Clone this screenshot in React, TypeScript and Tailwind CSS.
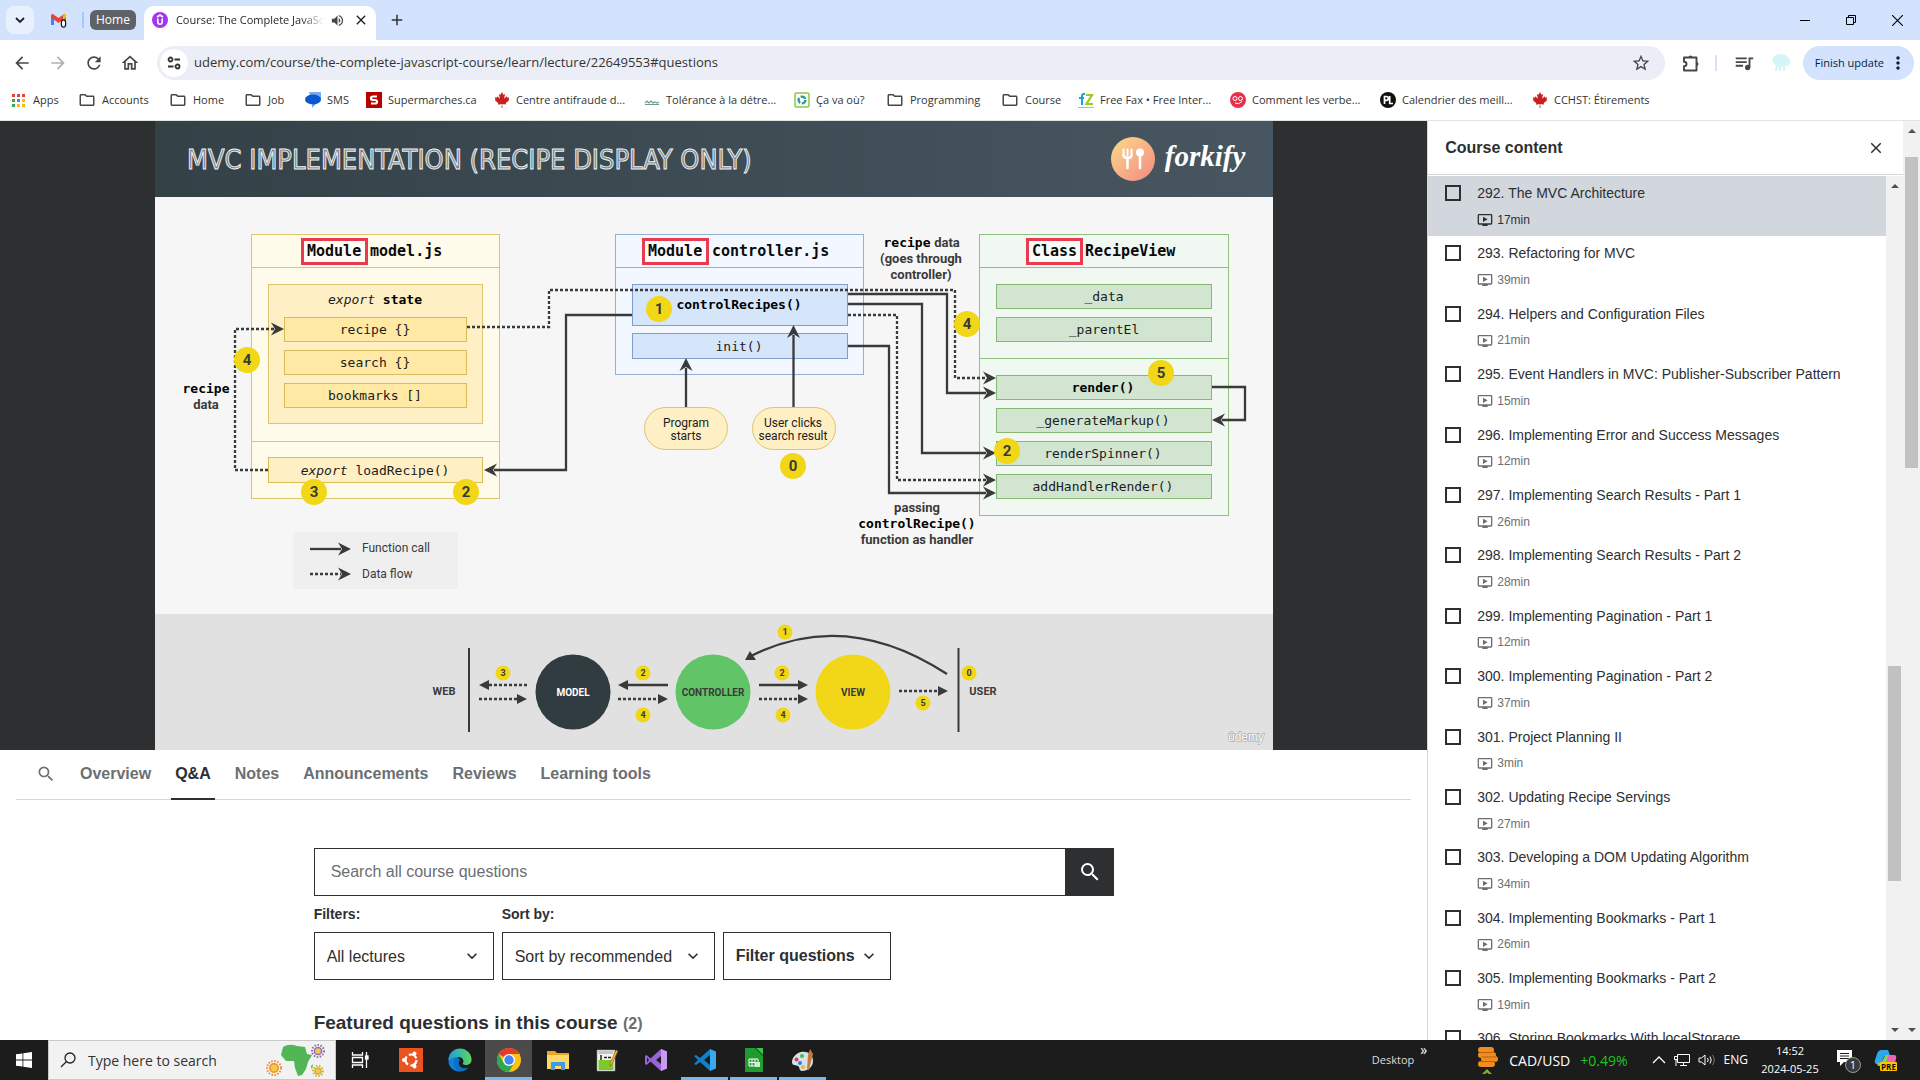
import React from "react";
import {
  MdArrowBack, MdArrowForward, MdRefresh, MdOutlineHome, MdVolumeUp, MdClose, MdAdd, MdStarBorder,
  MdQueueMusic, MdMoreVert, MdSearch, MdExpandMore, MdOndemandVideo, MdOutlineFolder,
} from "react-icons/md";
import { FaCanadianMapleLeaf } from "react-icons/fa";

/* ---------- Browser chrome ---------- */

function GmailIcon() {
  return (
    <svg viewBox="0 0 18 18" className="size-[18px]" aria-hidden="true">
      <path d="M1 4v10h3V7z" fill="#4285f4" />
      <path d="M13 7v7h3V4z" fill="#34a853" />
      <path d="M1 4l1.500-1.200L8.500 7l6-4.200L16 4v2.500l-7.500 5.500L1 6.500z" fill="#ea4335" />
      <path d="M13 4l1.500-1.200Q16 3 16 4.500v2L13 8.500z" fill="#fbbc04" />
      <ellipse cx="13.500" cy="12.500" rx="2.200" ry="3.700" fill="#fff" stroke="#111" strokeWidth="1.200" />
    </svg>
  );
}

function UdemyIcon() {
  return (
    <svg viewBox="0 0 16 16" className="size-4 shrink-0" aria-hidden="true">
      <circle cx="8" cy="8" r="8" fill="#a435f0" />
      <path d="M5 5l3-2 3 2M5.800 6.500v3.500a2.200 2.200 0 0 0 4.400 0V6.500" fill="none" stroke="#fff" strokeWidth="1.600" />
    </svg>
  );
}

function TuneIcon() {
  return (
    <svg viewBox="0 0 14 14" className="size-[14px]" fill="none" stroke="#333" strokeWidth="1.800" aria-hidden="true">
      <circle cx="3.500" cy="3.500" r="2" />
      <path d="M7.500 3.500H13M1 10.500h5.500" />
      <circle cx="10.500" cy="10.500" r="2" />
    </svg>
  );
}

function PuzzleIcon() {
  return (
    <svg viewBox="0 0 20 20" className="size-5" aria-hidden="true">
      <path d="M3 4.500h12.500v13H3v-4.200q2.500 0 2.500-2.300T3 8.700z" fill="none" stroke="#474747" strokeWidth="1.900" strokeLinejoin="round" />
      <path d="M7.500 4.500a2 2 0 0 1 4 0zM15.500 9a2 2 0 0 1 0 4z" fill="#474747" />
    </svg>
  );
}

function AppsIcon() {
  const colors = ["#ea4335", "#ea4335", "#ea4335", "#34a853", "#4285f4", "#fbbc04", "#34a853", "#fbbc04", "#fbbc04"];
  return (
    <svg viewBox="0 0 13 13" className="mr-0.5 size-[13px]" aria-hidden="true">
      {colors.map((c, i) => <rect key={i} x={(i % 3) * 5} y={Math.floor(i / 3) * 5} width="3" height="3" fill={c} />)}
    </svg>
  );
}

const maple = <FaCanadianMapleLeaf className="size-4 text-[#c8201e]" />;
const folder = <MdOutlineFolder className="size-[18px] text-[#474747]" />;

const bookmarks: { label: string; width: string; icon: React.ReactNode }[] = [
  { label: "Apps", width: "w-[66px]", icon: <AppsIcon /> },
  { label: "Accounts", width: "w-[91px]", icon: folder },
  { label: "Home", width: "w-[75px]", icon: folder },
  { label: "Job", width: "w-[61px]", icon: folder },
  {
    label: "SMS", width: "w-[61px]",
    icon: <svg viewBox="0 0 16 16" className="size-4"><path d="M4 0h8a4 4 0 0 1 3 8l-8 8V12z" fill="#7baaf7" /><ellipse cx="8" cy="7.500" rx="8" ry="5" fill="#0b57d0" /></svg>,
  },
  {
    label: "Supermarches.ca", width: "w-[128px]",
    icon: <svg viewBox="0 0 16 16" className="size-4"><rect width="16" height="16" fill="#b80000" /><path d="M11 4.500H7q-2 0-2 1.700T7 8h2q2 0 2 1.800t-2 1.700H5" fill="none" stroke="#fff" strokeWidth="2.200" /></svg>,
  },
  { label: "Centre antifraude d...", width: "w-[150px]", icon: maple },
  {
    label: "Tolérance à la détre...", width: "w-[150px]",
    icon: <svg viewBox="0 0 16 16" className="size-4"><path d="M1 11l2-2 2 2 2-2 2 2 2-1 2 1 2-1M1 12.500h14" fill="none" stroke="#6f9c8e" strokeWidth="1.200" /></svg>,
  },
  {
    label: "Ça va où?", width: "w-[92px]",
    icon: <svg viewBox="0 0 16 16" className="size-4"><rect x="1" y="1" width="14" height="14" rx="1.500" fill="#fff" stroke="#8dc63f" strokeWidth="1.500" /><circle cx="8" cy="8" r="3.400" fill="none" stroke="#2a9d9a" strokeWidth="2.400" strokeDasharray="5.500 1.600" /></svg>,
  },
  { label: "Programming", width: "w-[115px]", icon: folder },
  { label: "Course", width: "w-[77px]", icon: folder },
  {
    label: "Free Fax • Free Inter...", width: "w-[152px]",
    icon: <svg viewBox="0 0 16 16" className="size-4"><path d="M7 2H5.500Q4 2 4 4v9M1 6h5" fill="none" stroke="#1ba1e2" strokeWidth="2" /><path d="M8 3h6l-5.500 9H15" fill="none" stroke="#9bcb1b" strokeWidth="2.200" /><path d="M0 15.500h16" stroke="#7ec8ec" /></svg>,
  },
  {
    label: "Comment les verbe...", width: "w-[150px]",
    icon: <svg viewBox="0 0 16 16" className="size-4"><circle cx="8" cy="8" r="8" fill="#e8304a" /><circle cx="5" cy="6.500" r="2" fill="none" stroke="#fff" /><circle cx="10.500" cy="6.500" r="2" fill="none" stroke="#fff" /><path d="M5 11q4 2 7-1.500" fill="none" stroke="#fff" /></svg>,
  },
  {
    label: "Calendrier des meill...", width: "w-[152px]",
    icon: <svg viewBox="0 0 16 16" className="size-4"><circle cx="8" cy="8" r="8" fill="#111" /><path d="M4.500 12V4.500h2q1.800 0 1.800 1.900T6.500 8.300h-2M9.700 4v7.500h3.300" fill="none" stroke="#fff" strokeWidth="1.700" /></svg>,
  },
  { label: "CCHST: Étirements", width: "w-[130px]", icon: maple },
];

function TabStrip() {
  return (
    <div className="flex h-10 items-center bg-[#d3e3fd] pl-1.5 text-[#1f1f1f]">
      <button aria-label="Search tabs" className="flex size-7 items-center justify-center rounded-lg bg-[#eaf1fe]">
        <svg viewBox="0 0 10 10" className="size-[10px]" fill="none" stroke="#1f1f1f" strokeWidth="1.800"><path d="M1 3l4 4 4-4" /></svg>
      </button>
      <button aria-label="Gmail" className="ml-4"><GmailIcon /></button>
      <div className="ml-3.5 h-4 w-0.5 bg-[#a8c7fa]" />
      <button className="ml-1.5 h-5 rounded-md bg-[#5f6368] px-1.5 text-[12px] leading-5 text-white">Home</button>
      <div className="ml-2 mt-1.5 flex h-[34px] w-[232px] items-center rounded-t-[10px] bg-white pb-1.5 pl-2">
        <UdemyIcon />
        <span className="ml-2 w-[148px] overflow-hidden whitespace-nowrap text-[11px] mask-r-from-85%">Course: The Complete JavaScript</span>
        <MdVolumeUp className="ml-1.5 size-[15px] shrink-0 text-[#474747]" />
        <button aria-label="Close tab" className="ml-2"><MdClose className="size-4" /></button>
      </div>
      <button aria-label="New tab" className="ml-3"><MdAdd className="size-[18px] text-[#333]" /></button>
      <div className="ml-auto flex h-full">
        <button aria-label="Minimize" className="flex w-[46px] items-center justify-center"><svg viewBox="0 0 10 10" className="size-[10px]" stroke="#000"><path d="M0 5.500h10" /></svg></button>
        <button aria-label="Restore" className="flex w-[46px] items-center justify-center"><svg viewBox="0 0 10 10" className="size-[10px]" stroke="#000" fill="none"><path d="M.5 2.500h7v7h-7zM2.500 2.500v-2h7v7h-2" /></svg></button>
        <button aria-label="Close" className="flex w-[46px] items-center justify-center"><svg viewBox="0 0 10 10" className="size-[11px]" stroke="#000"><path d="M0 0l10 10M10 0L0 10" /></svg></button>
      </div>
    </div>
  );
}

function Toolbar() {
  return (
    <div className="flex h-[46px] items-center bg-white pl-3 text-[#474747]">
      <div className="flex gap-4">
        <button aria-label="Back"><MdArrowBack className="size-5" /></button>
        <button aria-label="Forward"><MdArrowForward className="size-5 text-[#b0b0b0]" /></button>
        <button aria-label="Reload"><MdRefresh className="size-5" /></button>
        <button aria-label="Home page"><MdOutlineHome className="size-5" /></button>
      </div>
      <div className="ml-[17px] flex h-[34px] flex-1 items-center rounded-full bg-[#ebeef7] pl-[3px] pr-3.5">
        <button aria-label="Site information" className="flex size-7 items-center justify-center rounded-full bg-white"><TuneIcon /></button>
        <input aria-label="Address" className="ml-1.5 flex-1 bg-transparent text-[13px] text-[#333] outline-none" defaultValue="udemy.com/course/the-complete-javascript-course/learn/lecture/22649553#questions" />
        <button aria-label="Bookmark this tab"><MdStarBorder className="size-5" /></button>
      </div>
      <button aria-label="Extensions" className="ml-4"><PuzzleIcon /></button>
      <div className="ml-3.5 h-4 w-0.5 bg-[#d3e3fd]" />
      <button aria-label="Media controls" className="ml-4"><MdQueueMusic className="size-[22px]" /></button>
      <button aria-label="Profile" className="ml-4">
        <svg viewBox="0 0 20 20" className="size-5"><path d="M10 1q5 0 8 4t0 7l-4 1v5h-2v-4h-2v4H8v-4l-2 4H4l1-6Q0 9 2 5t8-4z" fill="#d4f6f8" /></svg>
      </button>
      <button className="ml-3 mr-1.5 flex h-[34px] items-center rounded-full bg-[#d3e3fd] pl-3 pr-1.5 text-[11px] font-medium text-[#041e49]">
        Finish update <MdMoreVert className="ml-1 size-5" />
      </button>
    </div>
  );
}

function BookmarksBar() {
  return (
    <nav aria-label="Bookmarks" className="flex h-[35px] items-center border-b border-[#dfe5e0] bg-white pb-1.5 pl-3 text-[11px] text-[#333]">
      {bookmarks.map((b, i) => (
        <a key={i} href="#" className={"flex shrink-0 items-center gap-1.5 whitespace-nowrap " + b.width}>
          {b.icon}{b.label}
        </a>
      ))}
    </nav>
  );
}

/* ---------- Slide diagram ---------- */

const MONO = '"DejaVu Sans Mono", monospace';
const INK = "#3a3a3a";

type Box = { x: number; y: number; w: number; h: number; fill: string; stroke: string };
const boxes: Box[] = [
  { x: 251, y: 234, w: 249, h: 265, fill: "#fffbea", stroke: "#dcc56f" },
  { x: 268, y: 284, w: 215, h: 140, fill: "#ffefc4", stroke: "#dcc56f" },
  { x: 284, y: 317, w: 183, h: 25, fill: "#ffe9a5", stroke: "#d8bc58" },
  { x: 284, y: 350, w: 183, h: 25, fill: "#ffe9a5", stroke: "#d8bc58" },
  { x: 284, y: 383, w: 183, h: 25, fill: "#ffe9a5", stroke: "#d8bc58" },
  { x: 268, y: 457, w: 215, h: 26, fill: "#ffefc4", stroke: "#d8bc58" },
  { x: 615, y: 234, w: 249, h: 141, fill: "#f3f7ff", stroke: "#93b1d6" },
  { x: 632, y: 284, w: 216, h: 42, fill: "#d6e6fa", stroke: "#7f9ecb" },
  { x: 632, y: 333, w: 216, h: 26, fill: "#d6e6fa", stroke: "#7f9ecb" },
  { x: 979, y: 234, w: 250, h: 282, fill: "#f1f8f1", stroke: "#8fc380" },
  { x: 996, y: 284, w: 216, h: 25, fill: "#d1e5d0", stroke: "#86b873" },
  { x: 996, y: 317, w: 216, h: 25, fill: "#d1e5d0", stroke: "#86b873" },
  { x: 996, y: 375, w: 216, h: 25, fill: "#d1e5d0", stroke: "#86b873" },
  { x: 996, y: 408, w: 216, h: 25, fill: "#d1e5d0", stroke: "#86b873" },
  { x: 996, y: 441, w: 216, h: 25, fill: "#d1e5d0", stroke: "#86b873" },
  { x: 996, y: 474, w: 216, h: 25, fill: "#d1e5d0", stroke: "#86b873" },
];

const codeLabels: [string, number, number][] = [
  ["recipe {}", 375, 334], ["search {}", 375, 367], ["bookmarks []", 375, 400],
  ["init()", 739, 351], ["_data", 1104, 301], ["_parentEl", 1104, 334],
  ["_generateMarkup()", 1103, 425], ["renderSpinner()", 1103, 458], ["addHandlerRender()", 1103, 491],
];

const solidLines = [
  "M632 315H566V470H494", "M848 294H947V393H986", "M848 304H922V453H986", "M848 346H889V493H986",
  "M1212 387H1245V420H1222", "M686 407V368", "M793.500 407V335", "M310 549H341",
];
const dottedLines = [
  "M467 327H549V290H955V378H986", "M848 315H897V480H986", "M268 470H235V329H274", "M310 574H341",
];
const heads: [number, number, number][] = [
  [484, 470, 180], [996, 393, 0], [996, 453, 0], [996, 493, 0], [1212, 420, 180], [686, 358, -90], [793.5, 325, -90],
  [351, 549, 0], [996, 378, 0], [996, 480, 0], [284, 329, 0], [351, 574, 0],
];
const badges: [number, number, string][] = [
  [247, 360, "4"], [314, 492, "3"], [466, 492, "2"], [659, 309, "1"], [793, 466, "0"],
  [967, 324, "4"], [1161, 373, "5"], [1007, 451, "2"],
];
const smallBadges: [number, number, string][] = [
  [503, 673, "3"], [643, 673, "2"], [643, 715, "4"], [782, 673, "2"], [783, 715, "4"],
  [923, 703, "5"], [969, 673, "0"], [785, 632, "1"],
];
const flow: [number, number, number, boolean][] = [
  [527, 479, 685, true], [479, 527, 699, true], [668, 618, 685, false], [618, 668, 699, true],
  [759, 808, 685, false], [759, 808, 699, true], [899, 948, 691, true],
];

function Slide() {
  return (
    <svg viewBox="155 121 1118 629" className="w-[1118px] max-w-full" role="img" aria-label="MVC implementation diagram">
      <defs>
        <linearGradient id="top"><stop offset="0" stopColor="#344147" /><stop offset="1" stopColor="#475660" /></linearGradient>
        <linearGradient id="logo" x1="0" y1="0" x2="1" y2="1"><stop offset="0" stopColor="#fbdb89" /><stop offset="1" stopColor="#f48982" /></linearGradient>
      </defs>
      <rect x="155" y="121" width="1118" height="76" fill="url(#top)" />
      <rect x="155" y="197" width="1118" height="417" fill="#f6f6f6" />
      <rect x="155" y="614" width="1118" height="136" fill="#e1e1e1" />

      <text x="187" y="169" fontSize="27" fontFamily='"DejaVu Sans Condensed", sans-serif' fill="#76828a" stroke="#f0f2f2" strokeWidth="0.900">MVC IMPLEMENTATION (RECIPE DISPLAY ONLY)</text>
      <circle cx="1133" cy="159" r="22" fill="url(#logo)" />
      <g fill="none" stroke="#fff" strokeLinecap="round">
        <path d="M1123.500 149.500v6M1127.500 149.500v6M1131.500 149.500v6" strokeWidth="2" />
        <path d="M1123.500 155q0 3 4 3t4-3M1127.500 158v10M1140 156v12" strokeWidth="2.500" />
      </g>
      <circle cx="1140" cy="152.500" r="4" fill="#fff" />
      <text x="1205" y="166" fontSize="29" textAnchor="middle" fontFamily='"Liberation Serif", serif' fontStyle="italic" fontWeight="700" fill="#fff">forkify</text>

      {boxes.map((b, i) => <rect key={i} x={b.x + 0.5} y={b.y + 0.5} width={b.w - 1} height={b.h - 1} fill={b.fill} stroke={b.stroke} />)}
      <path d="M251 267.500h249M251 441.500h249" stroke="#dcc56f" />
      <path d="M615 267.500h249" stroke="#93b1d6" />
      <path d="M979 267.500h250M979 358.500h250" stroke="#8fc380" />

      <g fill="#fff" fillOpacity="0.5" stroke="#e93a50" strokeWidth="3">
        <rect x="302.500" y="239.500" width="64" height="24" />
        <rect x="643.500" y="239.500" width="64" height="24" />
        <rect x="1027.500" y="239.500" width="54" height="24" />
      </g>
      <g fontFamily={MONO} fontSize="15" fontWeight="700" fill="#0a0a0a">
        <text x="307" y="256">Module</text><text x="370" y="256">model.js</text>
        <text x="648" y="256">Module</text><text x="712" y="256">controller.js</text>
        <text x="1032" y="256">Class</text><text x="1085" y="256">RecipeView</text>
      </g>
      <g fontFamily={MONO} fontSize="13" fill="#1c1c1c">
        {codeLabels.map(([t, x, y]) => <text key={t} x={x} y={y} textAnchor="middle">{t}</text>)}
        <text x="375" y="304" textAnchor="middle"><tspan fontStyle="italic">export</tspan> <tspan fontWeight="700" fill="#000">state</tspan></text>
        <text x="375" y="475" textAnchor="middle"><tspan fontStyle="italic">export</tspan> loadRecipe()</text>
      </g>
      <g fontFamily={MONO} fontSize="13" fontWeight="700" fill="#000" textAnchor="middle">
        <text x="739" y="309">controlRecipes()</text>
        <text x="1103" y="392">render()</text>
        <text x="206" y="393">recipe</text>
        <text x="917" y="528">controlRecipe()</text>
        <text x="907" y="247">recipe</text>
      </g>
      <g fontFamily="Roboto, sans-serif" fontSize="13" fontWeight="700" fill={INK} textAnchor="middle">
        <text x="206" y="409">data</text>
        <text x="947" y="247">data</text>
        <text x="921" y="263">(goes through</text>
        <text x="921" y="279">controller)</text>
        <text x="917" y="512">passing</text>
        <text x="917" y="544">function as handler</text>
      </g>

      <rect x="644.500" y="407.500" width="83" height="42" rx="21" fill="#ffefc4" stroke="#dcc56f" />
      <rect x="752.500" y="407.500" width="83" height="42" rx="21" fill="#ffefc4" stroke="#dcc56f" />
      <g fontFamily="Roboto, sans-serif" fontSize="12" fill="#1c1c1c" textAnchor="middle">
        <text x="686" y="427">Program</text><text x="686" y="440">starts</text>
        <text x="793" y="427">User clicks</text><text x="793" y="440">search result</text>
      </g>
      <rect x="293" y="532" width="165" height="57" fill="#efefef" />
      <g fontFamily="Roboto, sans-serif" fontSize="12" fill={INK}>
        <text x="362" y="552">Function call</text><text x="362" y="578">Data flow</text>
      </g>

      <g fill="none" stroke={INK} strokeWidth="2.300">
        {solidLines.map((d) => <path key={d} d={d} />)}
        {dottedLines.map((d) => <path key={d} d={d} strokeDasharray="3 2" />)}
      </g>
      {heads.map(([x, y, r], i) => <path key={i} d="M0 0L-13 -6.500L-9 0L-13 6.500Z" transform={`translate(${x} ${y}) rotate(${r})`} fill={INK} />)}
      {badges.map(([x, y, t], i) => (
        <g key={i}>
          <circle cx={x} cy={y} r="13" fill="#f1d718" />
          <text x={x} y={y + 5} textAnchor="middle" fontFamily="Roboto, sans-serif" fontWeight="700" fontSize="15" fill={INK}>{t}</text>
        </g>
      ))}

      <path d="M469 648v84M958.500 648v84" stroke={INK} strokeWidth="2" />
      <path d="M947 674Q846 608 751 656" fill="none" stroke={INK} strokeWidth="2.300" />
      <path d="M745 660l5-9 6 9z" fill={INK} />
      {flow.map(([a, b, y, dotted], i) => {
        const dir = b > a ? 1 : -1;
        return (
          <g key={i}>
            <path d={`M${a} ${y}H${b - dir * 9}`} stroke={INK} strokeWidth="2.300" strokeDasharray={dotted ? "3 2" : undefined} />
            <path d={`M${b} ${y}l${-10 * dir} -5v10z`} fill={INK} />
          </g>
        );
      })}
      <circle cx="573" cy="692" r="37.500" fill="#313c41" />
      <circle cx="713" cy="692" r="37.500" fill="#61c466" />
      <circle cx="853" cy="692" r="37.500" fill="#f1d718" />
      <g fontFamily="Roboto, sans-serif" fontWeight="700" textAnchor="middle" fontSize="10" fill={INK}>
        <text x="573" y="696" fill="#fff">MODEL</text><text x="713" y="696">CONTROLLER</text><text x="853" y="696">VIEW</text>
        <g fontSize="11"><text x="444" y="695">WEB</text><text x="983" y="695">USER</text></g>
      </g>
      {smallBadges.map(([x, y, t], i) => (
        <g key={i}>
          <circle cx={x} cy={y} r="7.500" fill="#f1d718" />
          <text x={x} y={y + 3} textAnchor="middle" fontFamily="Roboto, sans-serif" fontWeight="700" fontSize="9" fill={INK}>{t}</text>
        </g>
      ))}
      <g fontSize="12" fontFamily='"Liberation Sans", sans-serif'>
        <text x="1228" y="741" fill="#fafafa" stroke="#b0b0b0" strokeWidth="1.500" paintOrder="stroke">ûdemy</text>
      </g>
    </svg>
  );
}

/* ---------- Course page ---------- */

const tabs = ["Overview", "Q&A", "Notes", "Announcements", "Reviews", "Learning tools"];

function Tabs() {
  return (
    <div className="mx-4 flex h-[50px] items-stretch gap-4 border-b border-[#d1d7dc] pl-5 text-base font-bold text-[#6a6f73]">
      <button aria-label="Search course" className="mr-1 pb-0.5"><MdSearch className="size-5" /></button>
      {tabs.map((t) => (
        <button key={t} className={t === "Q&A" ? "-mb-px border-b-2 border-[#2d2f31] px-1 text-[#2d2f31]" : "px-1 pb-px"}>{t}</button>
      ))}
    </div>
  );
}

function SelectBox({ id, label, option, width }: { id: string; label: string; option: string; width: string }) {
  return (
    <div className={width}>
      <label htmlFor={id} className="block text-sm font-bold">{label}</label>
      <div className="relative mt-2">
        <select id={id} className="h-12 w-full appearance-none border border-[#2d2f31] bg-white pl-3 pt-0.5 text-base">
          <option>{option}</option>
        </select>
        <MdExpandMore className="pointer-events-none absolute right-3 top-3.5 size-5" />
      </div>
    </div>
  );
}

function Questions() {
  return (
    <section className="mx-auto w-[800px] max-w-full pt-12">
      <form className="flex h-12">
        <input aria-label="Search all course questions" placeholder="Search all course questions" className="flex-1 border border-[#2d2f31] px-4 text-base placeholder:text-[#6a6f73]" />
        <button type="button" aria-label="Submit search" className="flex w-12 items-center justify-center bg-[#2d2f31] text-white"><MdSearch className="size-6" /></button>
      </form>
      <div className="mt-2 flex items-end gap-2">
        <SelectBox id="filter" label="Filters:" option="All lectures" width="w-[180px]" />
        <SelectBox id="sort" label="Sort by:" option="Sort by recommended" width="w-[213px]" />
        <button className="flex h-12 w-[168px] items-center gap-1 border border-[#2d2f31] pl-3 text-base font-bold">Filter questions <MdExpandMore className="size-5" /></button>
      </div>
      <h2 className="mt-[29px] whitespace-nowrap text-[19px] font-bold">Featured questions in this course <span className="text-base text-[#6a6f73]">(2)</span></h2>
    </section>
  );
}

const lectures: [string, string][] = [
  ["292. The MVC Architecture", "17min"], ["293. Refactoring for MVC", "39min"],
  ["294. Helpers and Configuration Files", "21min"], ["295. Event Handlers in MVC: Publisher-Subscriber Pattern", "15min"],
  ["296. Implementing Error and Success Messages", "12min"], ["297. Implementing Search Results - Part 1", "26min"],
  ["298. Implementing Search Results - Part 2", "28min"], ["299. Implementing Pagination - Part 1", "12min"],
  ["300. Implementing Pagination - Part 2", "37min"], ["301. Project Planning II", "3min"],
  ["302. Updating Recipe Servings", "27min"], ["303. Developing a DOM Updating Algorithm", "34min"],
  ["304. Implementing Bookmarks - Part 1", "26min"], ["305. Implementing Bookmarks - Part 2", "19min"],
  ["306. Storing Bookmarks With localStorage", "9min"],
];

function ScrollBar({ before, thumb }: { before: string; thumb: string }) {
  return (
    <div className="flex w-[17px] shrink-0 flex-col items-center bg-[#f1f1f1] py-2" aria-hidden="true">
      <div className="size-0 border-x-4 border-b-4 border-x-transparent border-b-[#505050]" />
      <div className={before} />
      <div className={"w-[13px] bg-[#c1c1c1] " + thumb} />
      <div className="mt-auto size-0 border-x-4 border-t-4 border-x-transparent border-t-[#505050]" />
    </div>
  );
}

function Sidebar() {
  return (
    <aside className="flex w-1/4 shrink-0 flex-col overflow-hidden border-l border-[#d1d7dc] bg-white">
      <div className="flex h-[54px] shrink-0 items-center justify-between border-b border-[#d1d7dc] pl-[17px] pr-[18px]">
        <h2 className="text-base font-bold">Course content</h2>
        <button aria-label="Close course content"><MdClose className="size-[18px]" /></button>
      </div>
      <div className="mt-px flex min-h-0 flex-1">
        <ul className="flex-1 overflow-hidden">
          {lectures.map(([title, time], i) => (
            <li key={title} className={"flex gap-4 py-2 pl-[17px] pr-4 " + (i === 0 ? "bg-[#d1d7dc]" : "")}>
              <input id={"lecture" + i} type="checkbox" className="mt-px size-4 shrink-0 appearance-none border-2 border-[#2d2f31]" />
              <div>
                <label htmlFor={"lecture" + i} className="block text-sm/[1.4]">{title}</label>
                <div className={"mt-2 flex items-center gap-1 text-xs/[1.4] " + (i === 0 ? "text-[#2d2f31]" : "text-[#6a6f73]")}>
                  <MdOndemandVideo className="size-4" />{time}
                </div>
              </div>
            </li>
          ))}
        </ul>
        <ScrollBar before="h-[478px]" thumb="h-[215px]" />
      </div>
    </aside>
  );
}

/* ---------- Taskbar ---------- */

const appIcons: { name: string; state: string; icon: React.ReactNode }[] = [
  { name: "Task view", state: "border-transparent", icon: <svg viewBox="0 0 24 24" className="size-6" fill="none" stroke="#fff" strokeWidth="1.300"><path d="M2.500 4v3h10V4M2.500 20v-3h10v3M2.500 9.500h10v5h-10zM16.500 4v16" /><rect x="15.500" y="8" width="2.500" height="3" fill="#fff" /></svg> },
  { name: "Ubuntu", state: "border-transparent", icon: <svg viewBox="0 0 24 24" className="size-6"><rect width="24" height="24" fill="#e95420" /><circle cx="12" cy="12" r="5.500" fill="none" stroke="#fff" strokeWidth="2.200" strokeDasharray="9 2.500" /><g fill="#fff"><circle cx="5" cy="12" r="2" /><circle cx="15.500" cy="5.500" r="2" /><circle cx="15.500" cy="18.500" r="2" /></g></svg> },
  {
    name: "Edge", state: "border-transparent",
    icon: <svg viewBox="0 0 24 24" className="size-6"><defs><linearGradient id="edge"><stop offset="0" stopColor="#1b9de2" /><stop offset="1" stopColor="#5fd75b" /></linearGradient></defs><path d="M.5 12a11.500 11.500 0 0 0 20 7.500c-5 2-9 0-9.500-3.500-.3-2 .5-3 1-4L7 6C2 7 .5 10 .5 12z" fill="#0c6fc4" /><path d="M.5 12a11.500 11.500 0 0 1 23 0c0 5-6 6-9 4 2-2 1-7-4-7-6 0-9 4-10 3z" fill="url(#edge)" /><path d="M7.500 10c-4 5-1 12 5 13.300-3 .7-11-1-12-9.500 1-2 3-3.500 7-3.800z" fill="#1380d8" /></svg>,
  },
  {
    name: "Chrome", state: "border-[#76b9ed] bg-[#4b4b4b]",
    icon: <svg viewBox="0 0 24 24" className="size-6"><circle cx="12" cy="12" r="12" fill="#fbc116" /><path d="M12 12L1.600 6A12 12 0 0 1 22.400 6H12z" fill="#e33b2e" /><path d="M12 12L6.800 15 1.600 6A12 12 0 0 0 12 24l5.200-9z" fill="#2da94f" /><circle cx="12" cy="12" r="6" fill="#fff" /><circle cx="12" cy="12" r="4.700" fill="#4086f4" /></svg>,
  },
  { name: "File Explorer", state: "border-transparent", icon: <svg viewBox="0 0 24 24" className="size-6"><path d="M1 3h8l2 2h12v16H1z" fill="#e8a626" /><path d="M1 7h22v14H1z" fill="#ffd968" /><path d="M5 22v-8h14v8h-4v-4H9v4z" fill="#3f9be8" /></svg> },
  { name: "Notepad++", state: "border-transparent", icon: <svg viewBox="0 0 24 24" className="size-6"><path d="M2 2h18v21H2z" fill="#f4f4f4" stroke="#888" strokeWidth=".6" /><path d="M3.500 12h15v10h-15z" fill="#7ec828" /><path d="M3.500 3h15v3h-15z" fill="#bcc8cc" /><path d="M6 7v5M9 9.500h3M13 9.500h3" stroke="#222" strokeWidth="1.500" /><path d="M21 2l2 1-6 13-2 2 0-3z" fill="#f0b030" stroke="#774d10" strokeWidth=".5" /></svg> },
  { name: "Visual Studio", state: "border-transparent", icon: <svg viewBox="0 0 24 24" className="size-6"><path d="M17 1l6 2.500v17L17 23 6.500 13.500 2.500 17 1 16V8l1.500-1 4 3.500zM17 8l-5 4 5 4zM3 9.500v5L5 12z" fill="#9b63d8" fillRule="evenodd" /><path d="M17 1l6 2.500v17L17 23z" fill="#c79bf2" /></svg> },
  { name: "Visual Studio Code", state: "border-[#76b9ed]", icon: <svg viewBox="0 0 24 24" className="size-6"><path d="M17 1L7 10 3 7 1 8l4 4-4 4 2 1 4-3 10 9zM17 7v10l-6-5z" fill="#0f80c9" fillRule="evenodd" /><path d="M17 1l6 2.500v17L17 23z" fill="#3aa9ef" /></svg> },
  { name: "LibreOffice Calc", state: "border-[#76b9ed]", icon: <svg viewBox="0 0 24 24" className="size-6"><path d="M3 0h10l8 8v16H3z" fill="#1f9b2f" /><path d="M14 0h7v7z" fill="#35c646" /><path d="M7 11h9v7H7zM7 14.500h9M10 11v7M13 11v7" fill="none" stroke="#fff" /><rect x="13" y="14" width="5" height="5" fill="#c9f0cd" /></svg> },
  { name: "Paint", state: "border-[#76b9ed]", icon: <svg viewBox="0 0 24 24" className="size-6"><path d="M10 4c8-1 12 3 12 9s-5 10-11 10c-3 0-2-4-4-5s-6 0-6-4 4-9 9-10z" fill="#d5e2ec" /><circle cx="5.500" cy="11.500" r="2" fill="#e33b2e" /><circle cx="11" cy="8" r="2" fill="#54b948" /><circle cx="9" cy="15" r="2" fill="#2c7be5" /><circle cx="12" cy="19" r="2" fill="#f3b61f" /><path d="M16 22l1-15 2-6 3 5-4 16z" fill="#c77b38" /></svg> },
];

function Sun({ x, y, r, c }: { x: number; y: number; r: number; c: string }) {
  return (
    <g>
      <circle cx={x} cy={y} r={r} fill="none" stroke={c} strokeWidth="2" strokeDasharray="1.500 1.500" />
      <circle cx={x} cy={y} r={r * 0.6} fill="#f7c948" stroke={c} strokeWidth="1.500" />
    </g>
  );
}

function Taskbar() {
  return (
    <footer className="flex h-10 shrink-0 items-stretch bg-[#1c1c1c] text-white">
      <button aria-label="Start" className="flex w-12 items-center justify-center">
        <svg viewBox="0 0 16 16" className="size-4" fill="#fff"><path d="M0 2.300L6.500 1.400V7.600H0zM7.300 1.300L16 0v7.600H7.300zM0 8.400h6.500v6.200L0 13.700zM7.300 8.400H16V16l-8.700-1.300z" /></svg>
      </button>
      <div className="flex w-[288px] items-center border border-[#c8c8c8] bg-[#f2f2f2] pl-[11px] text-[#222]">
        <svg viewBox="0 0 16 16" className="size-4" fill="none" stroke="#222" strokeWidth="1.300"><circle cx="10" cy="6" r="5" /><path d="M6.500 9.500L1 15" /></svg>
        <input aria-label="Type here to search" placeholder="Type here to search" className="ml-3 w-40 bg-transparent text-[14px] placeholder:text-[#333]" />
        <svg viewBox="0 0 62 36" className="ml-auto mr-2 h-9 w-[62px]" aria-hidden="true">
          <path d="M18 5q6-4 14-1l8 1 2 7 5 1-4 7-2 7-4 6-4 1-3-8-1-7-8 0-5-6z" fill="#52b656" />
          <path d="M46 24l2-2-1 6z" fill="#52b656" />
          <Sun x={9} y={26} r={7} c="#ef8b2c" />
          <Sun x={53} y={9} r={6} c="#8f6bb8" />
          <Sun x={53} y={29} r={5} c="#c9b63a" />
        </svg>
      </div>
      <div className="ml-px flex">
        {appIcons.map((a) => (
          <button key={a.name} aria-label={a.name} className="flex w-[49px] justify-center px-px">
            <span className={"flex h-full w-full items-center justify-center border-b-[3px] pt-[3px] " + a.state}>{a.icon}</span>
          </button>
        ))}
      </div>
      <div className="ml-auto flex items-center text-[14px]">
        <span className="text-[11px] text-[#ddd]">Desktop</span>
        <span className="ml-1.5 mb-5 text-[14px] leading-none">»</span>
        <svg viewBox="0 0 24 30" className="ml-12 h-[30px] w-6" aria-hidden="true">
          <g fill="#f28c1e">
            <rect x="3" y="2" width="16" height="6" rx="3" />
            <rect x="3" y="7" width="18" height="6" rx="3" />
            <rect x="6" y="11" width="17" height="6" rx="3" />
            <rect x="3" y="16" width="17" height="6" rx="3" />
          </g>
          <path d="M4 7.500h14M7 12h14M5 16.500h15" stroke="#b9600c" />
          <path d="M7 29l5-5 5 5h-3l-2-1.500L10 29z" fill="#7bb522" />
        </svg>
        <span className="ml-2.5">CAD/USD</span>
        <span className="ml-2.5 text-[#19c819]">+0.49%</span>
        <svg viewBox="0 0 14 8" className="ml-6 h-2 w-3.5" fill="none" stroke="#fff" strokeWidth="1.300"><path d="M1 7l6-6 6 6" /></svg>
        <svg viewBox="0 0 16 14" className="ml-2 h-3.5 w-4" fill="none" stroke="#fff"><path d="M3.500 1.500h12v8h-12zM9.500 9.500v3M6 12.500h7M.5 3.500h3v3h-3zM2 7v6" /></svg>
        <svg viewBox="0 0 18 14" className="ml-2 h-3.5 w-[18px]" fill="none" stroke="#fff"><path d="M1 5h2.500L7 2v10L3.500 9H1zM9.500 5q1.500 2 0 4M12 3.500q2.500 3.500 0 7" /><path d="M14.500 2q3.500 5 0 10" stroke="#777" /></svg>
        <span className="ml-2 text-[12px]">ENG</span>
        <div className="ml-3 w-[60px] text-center text-[11px] leading-[18px]">14:52<br />2024-05-25</div>
        <button aria-label="Notifications, 1 new" className="ml-4">
          <svg viewBox="0 0 26 28" className="h-7 w-[26px]"><path d="M1 4h15v12H8l-4 4v-4H1z" fill="#fff" /><path d="M4 7.500h9M4 10h9M4 12.500h9" stroke="#1c1c1c" /><circle cx="17" cy="19" r="7.500" fill="#3a3a3a" stroke="#999" /><text x="17" y="23" fontSize="11" textAnchor="middle" fill="#fff">1</text></svg>
        </button>
        <button aria-label="Copilot" className="ml-3 mr-[22px]">
          <svg viewBox="0 0 24 24" className="size-6"><path d="M8 2h6l2 5h-4q-2 0-3 4l-1.500 5H3q-3 0-2-4l2-6q1-4 5-4z" fill="#2aa7ee" /><path d="M3 15l5-1 3-7h4l-2 7q-1 4-4 4H5q-2 0-2-3z" fill="#7fd05c" /><path d="M14 7h6q3 0 2 4l-1 4h-9l2-5z" fill="#e865b8" /><rect x="6" y="14" width="17" height="9" rx="1" fill="#ffc400" /><text x="14.500" y="21.500" fontSize="8" fontWeight="700" textAnchor="middle" fill="#111">PRE</text></svg>
        </button>
      </div>
    </footer>
  );
}

export default function App() {
  return (
    <div className="flex h-screen flex-col overflow-hidden bg-white font-['Open_Sans',sans-serif]">
      <header>
        <TabStrip />
        <Toolbar />
        <BookmarksBar />
      </header>
      <div className="flex min-h-0 flex-1 font-['Liberation_Sans',sans-serif] text-[#2d2f31]">
        <div className="flex min-w-0 flex-1">
          <main className="min-w-0 flex-1 overflow-hidden">
            <div className="flex justify-center bg-[#2d2f31]"><Slide /></div>
            <Tabs />
            <Questions />
          </main>
          <Sidebar />
        </div>
        <ScrollBar before="h-6" thumb="h-[311px]" />
      </div>
      <Taskbar />
    </div>
  );
}
